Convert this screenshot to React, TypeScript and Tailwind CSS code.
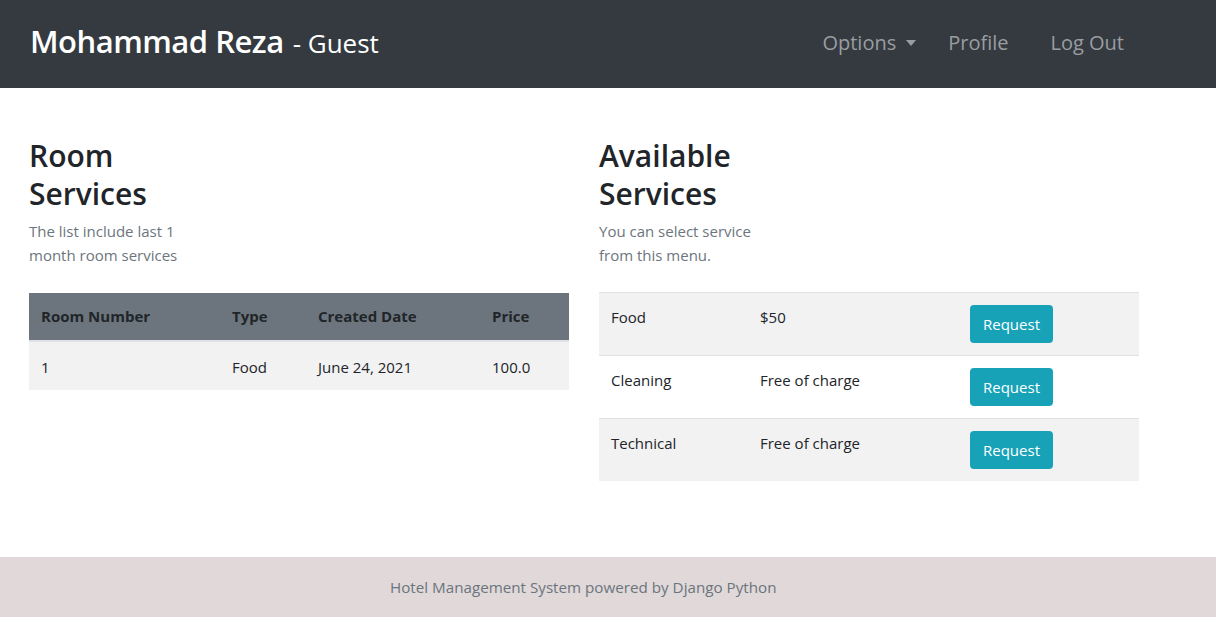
import React from "react";

const services = [
  { name: "Food", price: "$50" },
  { name: "Cleaning", price: "Free of charge" },
  { name: "Technical", price: "Free of charge" },
];

const App: React.FC = () => {
  return (
    <div
      className="min-h-[623px] flex flex-col bg-white text-[#212529]"
      style={{ fontFamily: '"Open Sans", "Noto Sans", sans-serif' }}
    >
      <nav className="h-[88px] bg-[#343a40] flex items-center pl-[30px] pr-[92px] pb-[5px]">
        <div className="flex items-baseline text-white">
          <span className="text-[31px] font-semibold tracking-[-0.5px]">Mohammad Reza</span>
          <span className="text-[26px] ml-[9px]">- Guest</span>
        </div>
        <ul className="ml-auto flex items-center text-[20px] text-[#9a9da0] pt-[2px]">
          <li className="flex items-center">
            Options
            <span className="ml-[10px] w-0 h-0 border-x-[5px] border-x-transparent border-t-[6px] border-t-[#9a9da0]" />
          </li>
          <li className="ml-[32px]">Profile</li>
          <li className="ml-[42px]">Log Out</li>
        </ul>
      </nav>

      <main className="flex-1 flex gap-[30px] pl-[29px] pt-[49px]">
        <section className="w-[540px]">
          <h2 className="text-[30px] font-semibold leading-[38px]">
            Room
            <br />
            Services
          </h2>
          <p className="mt-[6px] text-[15px] leading-[24px] text-[#6c757d]">
            The list include last 1
            <br />
            month room services
          </p>
          <table className="mt-[26px] w-full text-[15px] border-collapse">
            <thead>
              <tr className="bg-[#6c757d] text-left border-b-2 border-[#dee2e6]">
                <th className="h-[48px] pl-3 w-[191px] font-bold">Room Number</th>
                <th className="pl-3 w-[86px] font-bold">Type</th>
                <th className="pl-3 w-[174px] font-bold">Created Date</th>
                <th className="pl-3 font-bold">Price</th>
              </tr>
            </thead>
            <tbody>
              <tr className="bg-[#f2f2f2]">
                <td className="h-[49px] pl-3 pt-[2px]">1</td>
                <td className="pl-3 pt-[2px]">Food</td>
                <td className="pl-3 pt-[2px]">June 24, 2021</td>
                <td className="pl-3 pt-[2px]">100.0</td>
              </tr>
            </tbody>
          </table>
        </section>

        <section className="w-[540px]">
          <h2 className="text-[30px] font-semibold leading-[38px]">
            Available
            <br />
            Services
          </h2>
          <p className="mt-[6px] text-[15px] leading-[24px] text-[#6c757d]">
            You can select service
            <br />
            from this menu.
          </p>
          <div className="mt-[25px] text-[15px]">
            {services.map((s, i) => (
              <div
                key={s.name}
                className={`h-[63px] flex border-t border-[#dee2e6] ${
                  i % 2 === 0 ? "bg-[#f2f2f2]" : "bg-white"
                }`}
              >
                <div className="w-[149px] pl-3 pt-[13px]">{s.name}</div>
                <div className="w-[211px] pl-3 pt-[13px]">{s.price}</div>
                <div className="pl-[11px] pt-[12px]">
                  <button className="h-[38px] w-[83px] rounded-[4px] bg-[#17a2b8] text-white text-[15px]">
                    Request
                  </button>
                </div>
              </div>
            ))}
          </div>
        </section>
      </main>

      <footer className="h-[60px] mb-[6px] bg-[#e0d8d9] flex items-center pl-[390px] text-[15.2px] text-[#6c757d]">
        Hotel Management System powered by Django Python
      </footer>
    </div>
  );
};

export default App;
